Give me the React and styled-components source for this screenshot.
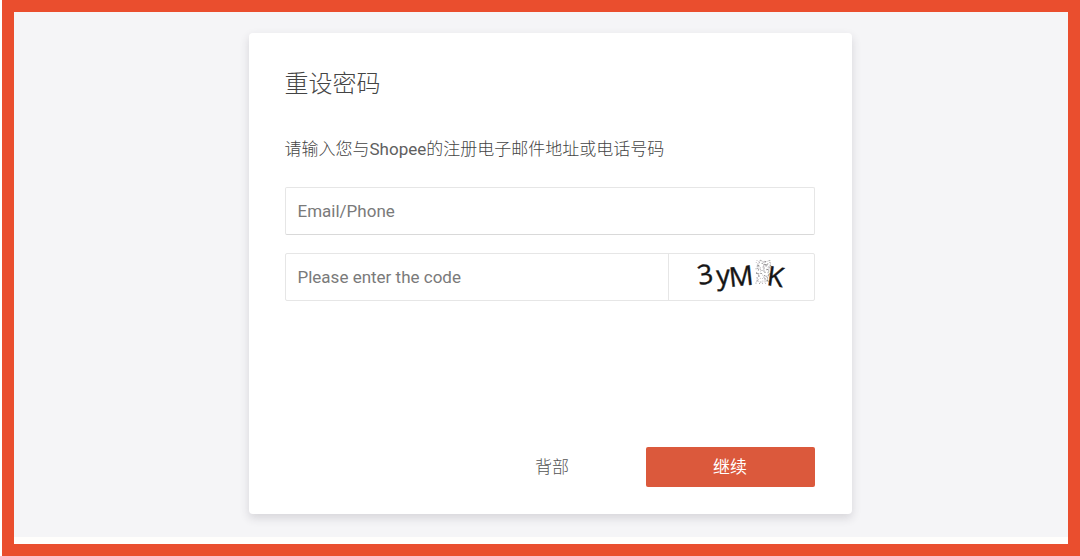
import styled, { createGlobalStyle } from "styled-components"
import { useState } from "react"


const GlobalStyle = createGlobalStyle`
  * {
    box-sizing: border-box;
  }
  body {
    margin: 0;
    background: #fff;
    font-family: Roboto, "Noto Sans CJK SC", sans-serif;
  }
`

const Frame = styled.div`
  min-height: 100vh;
  margin-left: 2px;
  border: solid #ea4e2e 12px;
  padding-bottom: 7px;
  background: #fffefc;
  display: flex;
`

const Page = styled.main`
  flex: 1;
  padding: 21px 0 23px 18px;
  background: #f5f5f7;
  display: flex;
  justify-content: center;
  align-items: flex-start;
`

const Card = styled.form`
  width: 100%;
  max-width: 603px;
  padding: 36px 37px 27px 36px;
  border-radius: 4px;
  background: #fff;
  box-shadow: 0 4px 10px rgba(50, 45, 60, 0.16);
`

const Title = styled.h1`
  margin: 0 0 37px;
  font-size: 24px;
  font-weight: 300;
  line-height: 30px;
  color: #444;
`

const Hint = styled.p`
  margin: 0 0 25px;
  font-size: 17px;
  font-weight: 300;
  line-height: 26px;
  color: #444;

  span {
    font-weight: 400;
    color: #606060;
  }
`

const Field = styled.div`
  height: 48px;
  margin-bottom: 18px;
  border: solid #e6e6e6 1px;
  border-bottom-color: ${({ $strong }) => ($strong ? "#d9d9d9" : "#e6e6e6")};
  border-radius: 2px;
  display: flex;
`

const TextInput = styled.input`
  flex: 1;
  min-width: 0;
  padding: 0 12px;
  border: 0;
  outline: 0;
  background: transparent;
  font-family: inherit;
  font-size: 17px;
  color: #333;

  &::placeholder {
    color: #7a7a7a;
    opacity: 1;
  }
`

const Captcha = styled.div`
  width: 146px;
  border-left: solid #e6e6e6 1px;
  display: flex;
  align-items: center;
  justify-content: center;

  text {
    font-family: "Open Sans", "Noto Sans", sans-serif;
    font-size: 27px;
    fill: #151515;
    stroke: #151515;
    stroke-width: 0.4;
  }
`

const Actions = styled.div`
  margin-top: 146px;
  display: flex;
  justify-content: flex-end;
  gap: 9px;
`

const Button = styled.button`
  width: 169px;
  height: 40px;
  padding: 0 0 4px;
  border: 0;
  border-radius: 2px;
  background: ${({ $primary }) => ($primary ? "#db593c" : "transparent")};
  color: ${({ $primary }) => ($primary ? "#fff" : "#555")};
  font-family: inherit;
  font-size: 17px;
  font-weight: ${({ $primary }) => ($primary ? 400 : 300)};
  cursor: pointer;
`

const letters = [
  { char: "3", x: 12, y: 30, turn: -9 },
  { char: "y", x: 30, y: 30, turn: -4 },
  { char: "M", x: 43, y: 32, turn: -6 },
  { char: "K", x: 79, y: 30, turn: 8 },
]

// speckles that hide one of the code's letters
const scatter = (n) => Math.abs(Math.sin(n * 12.9898) * 43758.5453) % 1

const speckles = Array.from({ length: 150 }, (_, i) => ({
  x: 69 + scatter(i + 1) * 15,
  y: 5 + scatter(i + 301) * 24,
  shade: i % 3 === 0 ? "#777" : "#b5b0b5",
}))

function CaptchaImage() {
  return (
    <svg width="108" height="44" viewBox="0 0 108 44" role="img">
      {speckles.map((dot, i) => (
        <circle key={i} cx={dot.x} cy={dot.y} r="0.5" fill={dot.shade} />
      ))}
      {letters.map(({ char, x, y, turn }) => (
        <text key={char} x={x} y={y} transform={`rotate(${turn} ${x} ${y})`}>{char}</text>
      ))}
    </svg>
  )
}


export default function App() {
  const [ account, setAccount ] = useState('')
  const [ code, setCode ] = useState('')

  return (
    <>
      <GlobalStyle />
      <Frame>
        <Page>
          <Card onSubmit={(event) => event.preventDefault()}>
            <Title>重设密码</Title>
            <Hint id="hint">请输入您与<span>Shopee</span>的注册电子邮件地址或电话号码</Hint>
            <Field $strong>
              <TextInput
                type="text"
                aria-label="Email/Phone"
                aria-describedby="hint"
                placeholder="Email/Phone"
                value={account}
                onChange={(event) => setAccount(event.target.value)}
              />
            </Field>
            <Field>
              <TextInput
                type="text"
                aria-label="Please enter the code"
                placeholder="Please enter the code"
                value={code}
                onChange={(event) => setCode(event.target.value)}
              />
              <Captcha>
                <CaptchaImage />
              </Captcha>
            </Field>
            <Actions>
              <Button type="button">背部</Button>
              <Button type="submit" $primary>继续</Button>
            </Actions>
          </Card>
        </Page>
      </Frame>
    </>
  )
}
